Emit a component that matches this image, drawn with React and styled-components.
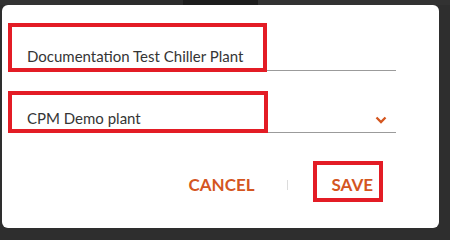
import React from "react";
import styled, { createGlobalStyle } from "styled-components";

const GlobalStyle = createGlobalStyle`
  html, body {
    margin: 0;
    padding: 0;
    background: #2e2e2e;
    font-family: Lato, "Open Sans", sans-serif;
  }
`;

const Screen = styled.div`
  width: 450px;
  height: 235px;
  overflow: hidden;
  background: #2e2e2e;
`;

const TopStrip = styled.div`
  display: flex;
  height: 5px;
`;

const Strip = styled.div`
  width: ${({ w }) => w}px;
  flex: ${({ grow }) => (grow ? 1 : "none")};
  background: ${({ tone }) => tone};
`;

const Dialog = styled.div`
  position: relative;
  width: 437px;
  height: 223px;
  margin-left: 2px;
  background: #ffffff;
  border-radius: 6px;
  box-sizing: border-box;
  padding: 38px 43px 0 10px;
`;

const Field = styled.div`
  position: relative;
  display: flex;
  align-items: center;
  justify-content: space-between;
  padding: 3px 9px 4px 15px;
  margin-top: ${({ gap }) => gap || 0}px;
  line-height: 20px;
  font-size: 15px;
  color: #353535;
  border-bottom: 1px solid #9b9b9b;
`;

const Highlight = styled.div`
  position: absolute;
  left: ${({ l }) => l}px;
  top: ${({ t }) => t}px;
  width: ${({ w }) => w}px;
  height: ${({ h }) => h}px;
  box-sizing: border-box;
  border: 4px solid #e31c25;
  pointer-events: none;
`;

const Chevron = styled.svg`
  width: 12px;
  height: 8px;
  margin-top: 4px;
`;

const Actions = styled.div`
  display: flex;
  align-items: center;
  justify-content: flex-end;
  margin-top: 42px;
  margin-right: 7px;
`;

const TextButton = styled.button`
  position: relative;
  background: none;
  border: none;
  padding: 0 16px;
  font-family: Lato, "Open Sans", sans-serif;
  font-weight: 700;
  font-size: 17px;
  line-height: 20px;
  color: #d4561f;
  cursor: pointer;
`;

const Divider = styled.span`
  width: 1px;
  height: 10px;
  background: #dcdcdc;
  margin: 0 28px 0 16px;
`;

export default function App() {
  return (
    <Screen>
      <GlobalStyle />
      <TopStrip>
        <Strip w={60} tone="#333333" />
        <Strip w={123} tone="#2c2c2c" />
        <Strip w={75} tone="#1d1d1d" />
        <Strip grow tone="#323232" />
      </TopStrip>
      <Dialog>
        <Field>
          <span>Documentation Test Chiller Plant</span>
          <Highlight l={-4} t={-20} w={259} h={49} />
        </Field>
        <Field gap={34}>
          <span>CPM Demo plant</span>
          <Chevron viewBox="0 0 12 8">
            <path d="M1.5 1.5 L6 6 L10.5 1.5" fill="none" stroke="#d4561f" strokeWidth="2.3" />
          </Chevron>
          <Highlight l={-4} t={-14} w={260} h={42} />
        </Field>
        <Actions>
          <TextButton>CANCEL</TextButton>
          <Divider />
          <TextButton>
            SAVE
            <Highlight l={-3} t={-14} w={70} h={41} />
          </TextButton>
        </Actions>
      </Dialog>
    </Screen>
  );
}
